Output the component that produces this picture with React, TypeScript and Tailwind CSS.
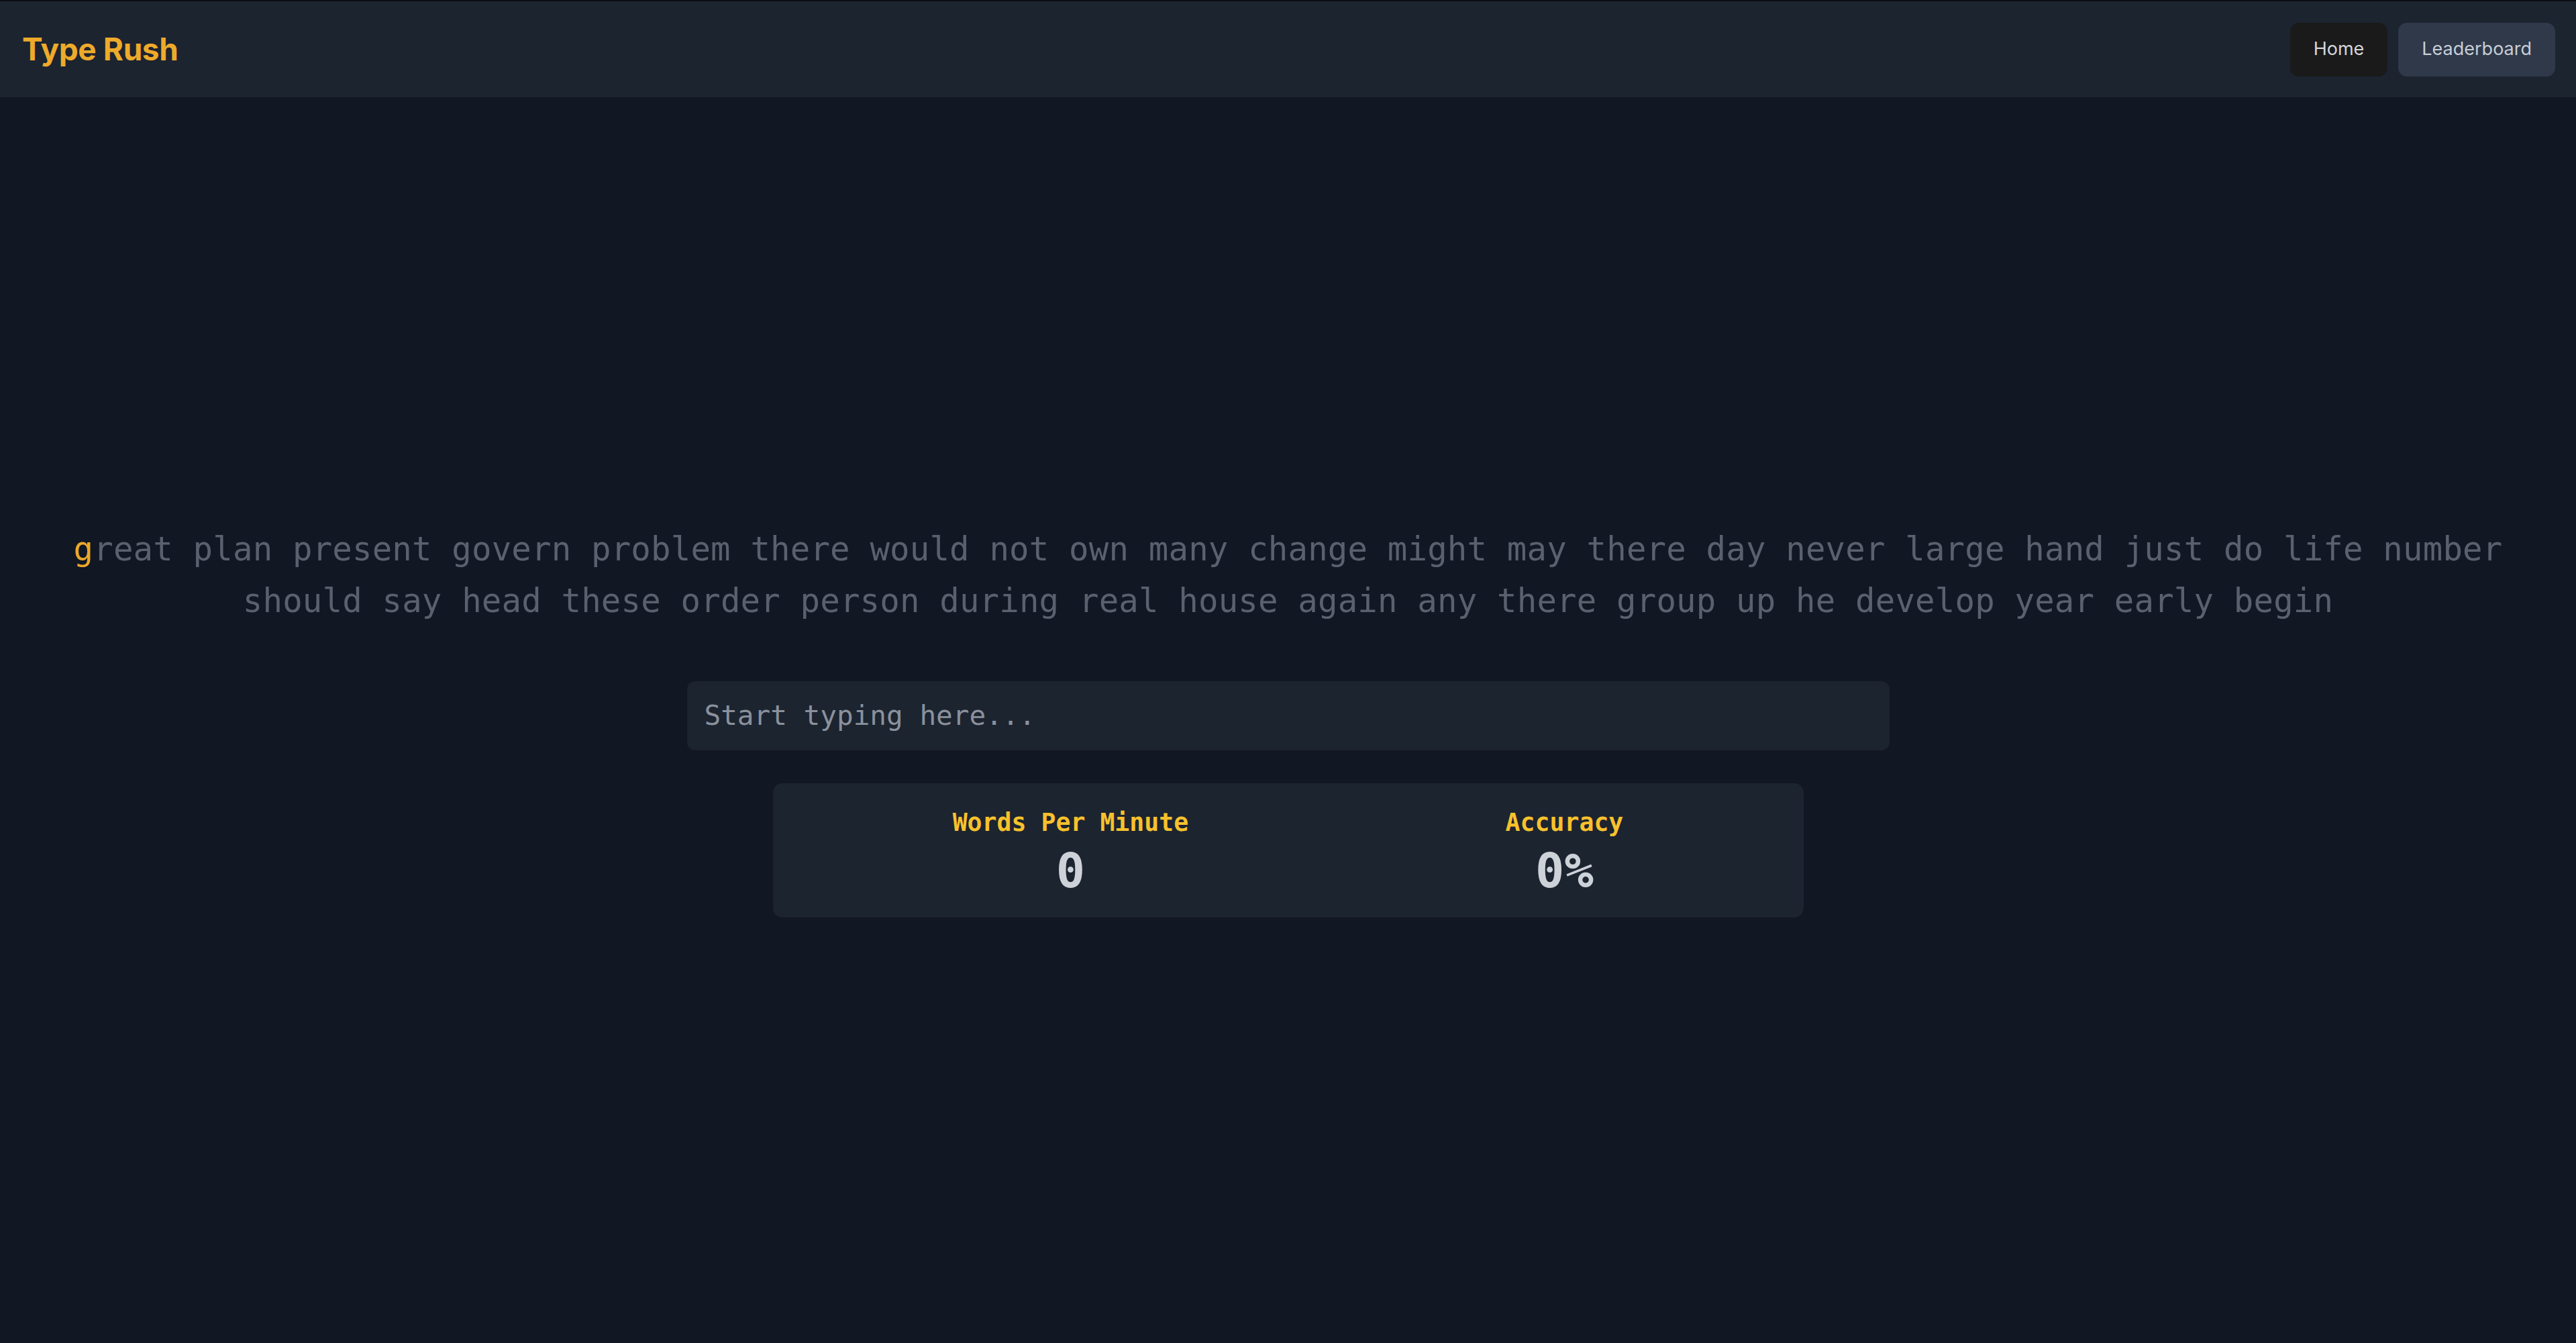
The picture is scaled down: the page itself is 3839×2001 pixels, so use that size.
import React, { useState } from "react";

const PASSAGE =
  "great plan present govern problem there would not own many change might may there day never large hand just do life number should say head these order person during real house again any there group up he develop year early begin";

const Header: React.FC = () => {
  return (
    <header className="flex h-[145px] items-center justify-between border-t-2 border-[#0c0e12] bg-[#1c2430] pl-[33px] pr-[31px]">
      <h1 className="font-['Inter',sans-serif] text-[46px] font-bold tracking-[-0.4px] text-[#eeaa2a]">
        Type Rush
      </h1>
      <nav className="flex items-center gap-[16px] font-['Inter',sans-serif] text-[27px]">
        <button className="h-[80px] rounded-[13px] bg-[#1a1a1a] px-[35px] text-[#d3d6db]">
          Home
        </button>
        <button className="h-[80px] rounded-[13px] bg-[#2f394a] px-[35px] text-[#c8cdd5]">
          Leaderboard
        </button>
      </nav>
    </header>
  );
};

const App: React.FC = () => {
  const [typed, setTyped] = useState("");

  return (
    <div className="flex min-h-screen flex-col bg-[#111723] font-['DejaVu_Sans_Mono',monospace]">
      <Header />

      <main className="flex flex-1 flex-col items-center justify-center">
        {/* passage */}
        <p className="w-[3700px] text-center text-[49px] leading-[77px] tracking-[0.17px] text-[#5a616e]">
          <span className="text-[#eba72a]">{PASSAGE[0]}</span>
          {PASSAGE.slice(1)}
        </p>

        <input
          type="text"
          value={typed}
          onChange={(e) => setTyped(e.target.value)}
          placeholder="Start typing here..."
          className="mt-[81px] h-[103px] w-[1792px] rounded-[12px] bg-[#1c2430] px-[26px] text-[41px] text-[#c8cdd5] outline-none placeholder:text-[#8a919c]"
        />

        {/* stats */}
        <div className="mt-[49px] flex w-[1536px] justify-around rounded-[14px] bg-[#1c2430] px-[32px] pb-[34px] pt-[39px]">
          <div className="flex flex-col items-center">
            <span className="text-[36.5px] font-semibold leading-[40px] text-[#f8c12c]">
              Words Per Minute
            </span>
            <span className="mt-[15px] text-[72px] font-bold leading-[72px] text-[#cdd1d8]">
              0
            </span>
          </div>
          <div className="flex flex-col items-center">
            <span className="text-[36.5px] font-semibold leading-[40px] text-[#f8c12c]">
              Accuracy
            </span>
            <span className="mt-[15px] text-[72px] font-bold leading-[72px] text-[#cdd1d8]">
              0%
            </span>
          </div>
        </div>
      </main>
    </div>
  );
};

export default App;
